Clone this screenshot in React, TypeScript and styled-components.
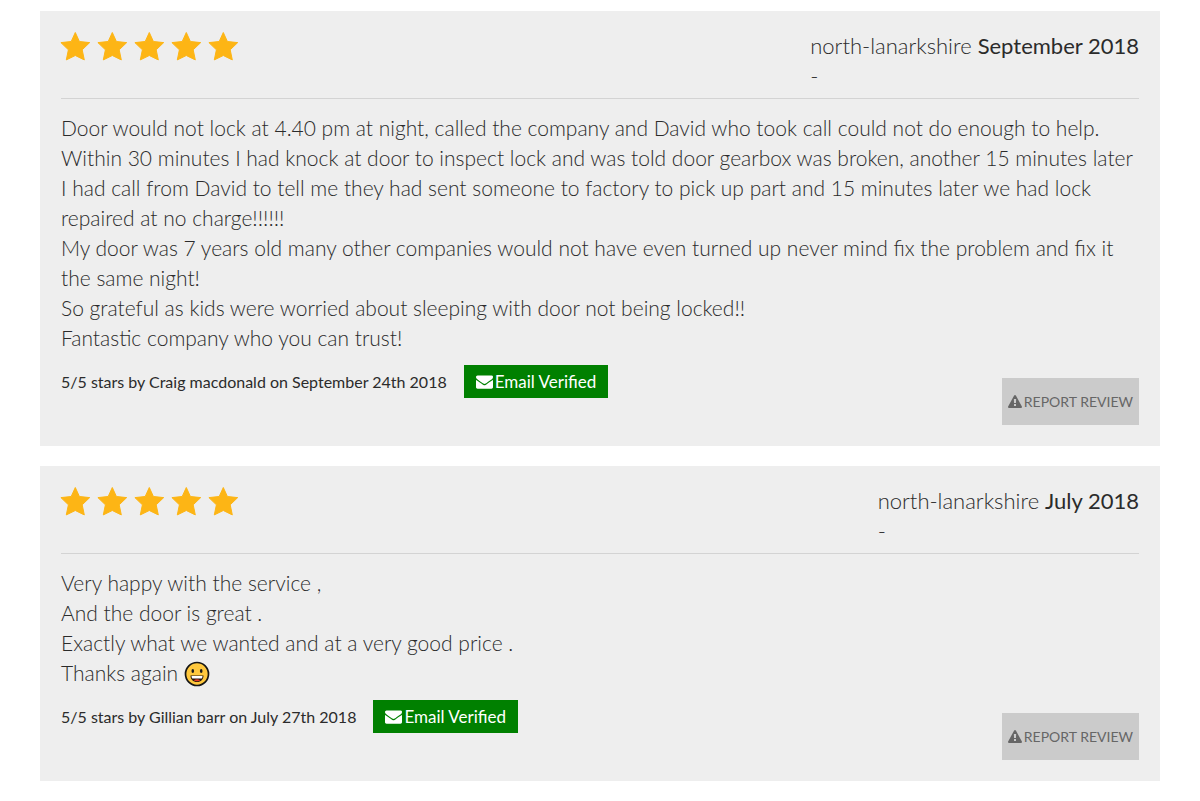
import React from "react";
import styled, { createGlobalStyle } from "styled-components";

const GlobalStyle = createGlobalStyle`
  *, *::before, *::after { box-sizing: border-box; }
  body {
    margin: 0;
    background: #fff;
    color: #2b2b2b;
    font-family: Lato, "Liberation Sans", sans-serif;
    font-size: 21px;
    font-weight: 300;
    line-height: 30px;
  }
`;

const ReviewList = styled.main`
  display: flex;
  flex-direction: column;
  gap: 20px;
  padding: 11px 40px 19px;
`;

const Card = styled.article`
  padding: 20px 21px 21px;
  background: #eee;
`;

const CardHeader = styled.header`
  display: flex;
  justify-content: space-between;
  padding-bottom: 7px;
  margin-bottom: 14px;
  border-bottom: 1px solid #d3d3d3;
`;

const Stars = styled.div`
  display: flex;
  gap: 5px;
  margin-left: -1px;
`;

const StarIcon = styled.svg`
  width: 32px;
  height: 31px;
  fill: #fdb515;
  stroke: #fdb515;
  stroke-linejoin: round;
`;

const Place = styled.div`
  font-size: 22px;
`;

const Month = styled.strong`
  font-weight: 400;
`;

const Body = styled.p`
  margin: 0;
  white-space: pre-line;
`;

const Emoji = styled.svg`
  width: 26px;
  height: 26px;
  vertical-align: -6px;
`;

const CardFooter = styled.footer`
  display: flex;
  justify-content: space-between;
  align-items: flex-end;
  min-height: 60px;
  margin-top: 12px;
`;

const Meta = styled.div`
  display: flex;
  align-items: center;
  align-self: flex-start;
  gap: 17px;
  font-size: 16px;
  font-weight: 400;
  line-height: 33px;
`;

const Badge = styled.span`
  display: inline-flex;
  align-items: center;
  gap: 2px;
  padding: 0 12px;
  background: #008000;
  color: #fff;
  font-size: 17px;
`;

const Icon = styled.svg<{ $size: number }>`
  width: ${({ $size }) => $size}px;
  height: ${({ $size }) => $size}px;
  fill: currentColor;
`;

const ReportButton = styled.button`
  display: inline-flex;
  align-items: center;
  gap: 2px;
  height: 47px;
  padding: 0 6px;
  border: 0;
  background: #cbcbcb;
  color: #666;
  font: 400 14px/20px Lato, "Liberation Sans", sans-serif;
  text-transform: uppercase;
  cursor: pointer;
`;

const Star = () => (
  <StarIcon viewBox="0 0 32 31" aria-hidden="true">
    <path d="M15.3 1.500 19.400 10.500 29.700 11.600 22.200 18.800 24.300 28.900 15.300 24.500 6.300 28.900 8.400 18.800 .9 11.600 11.200 10.500Z" />
  </StarIcon>
);

const Envelope = () => (
  <Icon $size={17} viewBox="0 0 1792 1792" aria-hidden="true">
    <path d="M1792 710v794q0 66-47 113t-113 47H160q-66 0-113-47T0 1504V710q44 49 101 87 362 246 497 345 57 42 92.500 65.500t94.500 48 110 24.500h2q51 0 110-24.500t94.500-48T1194 1142q170-123 498-345 57-39 100-87zm0-294q0 79-49 151t-122 123q-376 261-468 325-10 7-42.500 31t-54 38-52 32.500-57.500 27-50 9h-2q-23 0-50-9t-57.500-27-52-32.500-54-38T639 1015q-91-64-262-182.500T172 690q-62-42-117-115.500T0 438q0-78 41.500-130T160 256h1472q65 0 112.500 47t47.500 113z" />
  </Icon>
);

const Warning = () => (
  <Icon $size={14} viewBox="0 0 1792 1792" aria-hidden="true">
    <path d="M1024 1375v-190q0-14-9.500-23.500T992 1152H800q-13 0-22.500 9.500T768 1185v190q0 14 9.500 23.500T800 1408h192q13 0 22.500-9.500t9.500-23.500zm-2-374l18-459q0-12-10-19-13-11-24-11H786q-11 0-24 11-10 7-10 21l17 457q0 10 10 16.500t24 6.500h185q14 0 23.500-6.500t10.500-16.500zm-14-934l768 1408q35 63-2 126-17 29-46.500 46t-63.500 17H128q-34 0-63.500-17T18 1601q-37-63-2-126L784 67q17-31 47-49t65-18 65 18 47 49z" />
  </Icon>
);

const Grin = () => (
  <Emoji viewBox="0 0 26 26" role="img" aria-label="Grinning face">
    <circle cx="13" cy="13" r="11.500" fill="#ffc83d" stroke="#161616" strokeWidth="1.700" />
    <ellipse cx="8.800" cy="10" rx="1.300" ry="2" fill="#1b1b1b" />
    <ellipse cx="17.200" cy="10" rx="1.300" ry="2" fill="#1b1b1b" />
    <path d="M6.500 14.500h13c0 4-2.700 6.500-6.500 6.500S6.500 18.500 6.500 14.500Z" fill="#26160a" />
    <path d="M7.500 15h11c0 1-.3 1.900-.8 2.500H8.300c-.5-.6-.8-1.500-.8-2.500Z" fill="#fff" />
    <path d="M9.800 19.200c1.700-1.200 4.700-1.200 6.400 0-1.600 1.500-4.800 1.500-6.400 0Z" fill="#e03a24" />
  </Emoji>
);

type Review = {
  month: string;
  text: string;
  grin?: boolean;
  credit: string;
};

const reviews: Review[] = [
  {
    month: "September 2018",
    text:
      "Door would not lock at 4.40 pm at night, called the company and David who took call could not do enough to help. Within 30 minutes I had knock at door to inspect lock and was told door gearbox was broken, another 15 minutes later I had call from David to tell me they had sent someone to factory to pick up part and 15 minutes later we had lock repaired at no charge!!!!!!\n" +
      "My door was 7 years old many other companies would not have even turned up never mind fix the problem and fix it the same night!\n" +
      "So grateful as kids were worried about sleeping with door not being locked!!\n" +
      "Fantastic company who you can trust!",
    credit: "5/5 stars by Craig macdonald on September 24th 2018",
  },
  {
    month: "July 2018",
    text:
      "Very happy with the service ,\nAnd the door is great .\nExactly what we wanted and at a very good price .\nThanks again ",
    grin: true,
    credit: "5/5 stars by Gillian barr on July 27th 2018",
  },
];

export default function App() {
  return (
    <>
      <GlobalStyle />
      <ReviewList>
        {reviews.map((review) => (
          <Card key={review.credit}>
            <CardHeader>
              <Stars role="img" aria-label="5 out of 5 stars">
                {[1, 2, 3, 4, 5].map((n) => (
                  <Star key={n} />
                ))}
              </Stars>
              <Place>
                north-lanarkshire <Month>{review.month}</Month>
                <br />-
              </Place>
            </CardHeader>
            <Body>
              {review.text}
              {review.grin && <Grin />}
            </Body>
            <CardFooter>
              <Meta>
                <span>{review.credit}</span>
                <Badge>
                  <Envelope />
                  Email Verified
                </Badge>
              </Meta>
              <ReportButton type="button">
                <Warning />
                Report review
              </ReportButton>
            </CardFooter>
          </Card>
        ))}
      </ReviewList>
    </>
  );
}
